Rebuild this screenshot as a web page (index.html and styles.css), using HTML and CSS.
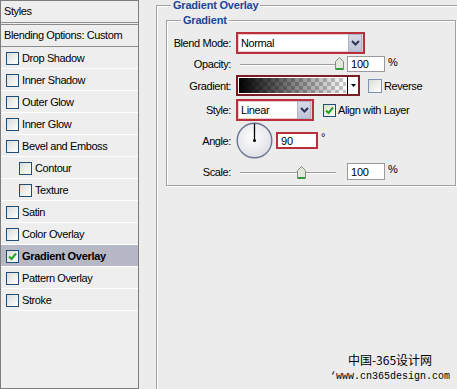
FILE: index.html
```html
<!DOCTYPE html>
<html lang="en">
<head>
    <meta charset="UTF-8">
    <title>Layer Style - Gradient Overlay</title>
    <link rel="stylesheet" href="styles.css">
</head>
<body>
<div class="window">
    <div class="styles-panel">
        <div class="panel-head">Styles</div>
        <div class="panel-blend">Blending Options: Custom</div>
        <ul class="effects">
            <li><span class="check"></span>Drop Shadow</li>
            <li><span class="check"></span>Inner Shadow</li>
            <li><span class="check"></span>Outer Glow</li>
            <li><span class="check"></span>Inner Glow</li>
            <li><span class="check"></span>Bevel and Emboss</li>
            <li class="sub"><span class="check"></span>Contour</li>
            <li class="sub"><span class="check"></span>Texture</li>
            <li><span class="check"></span>Satin</li>
            <li><span class="check"></span>Color Overlay</li>
            <li class="active"><span class="check"><svg width="11" height="11" viewBox="0 0 11 11"><path d="M2 5.5 L4.5 8 L9 2.5" fill="none" stroke="#23a323" stroke-width="2"/></svg></span>Gradient Overlay</li>
            <li><span class="check"></span>Pattern Overlay</li>
            <li><span class="check"></span>Stroke</li>
        </ul>
    </div>

    <div class="settings">
        <div class="group outer">
            <span class="group-title">Gradient Overlay</span>
            <div class="group inner">
                <span class="group-title">Gradient</span>

                <div class="row row-blend">
                    <label class="field-label">Blend Mode:</label>
                    <div class="select marked select-wide">
                        <span class="select-value">Normal</span>
                        <span class="select-btn"><svg width="9" height="6" viewBox="0 0 9 6"><path d="M1 1 L4.5 4.5 L8 1" fill="none" stroke="#2e3658" stroke-width="2"/></svg></span>
                    </div>
                </div>

                <div class="row row-opacity">
                    <label class="field-label">Opacity:</label>
                    <div class="slider">
                        <div class="track"></div>
                        <span class="thumb thumb-opacity"><svg width="9" height="13" viewBox="0 0 9 13"><path d="M0.5 4.5 L4.5 0.5 L8.5 4.5 V12.5 H0.5 Z" fill="#e4e6dc" stroke="#7c8c7c"/><path d="M1 12 H8" stroke="#2f9c3a" stroke-width="2"/></svg></span>
                    </div>
                    <input class="num" type="text" value="100">
                    <span class="unit">%</span>
                </div>

                <div class="row row-gradient">
                    <label class="field-label">Gradient:</label>
                    <div class="swatch">
                        <span class="swatch-fill"></span>
                        <span class="swatch-btn"><svg width="5" height="3" viewBox="0 0 5 3"><path d="M0 0 H5 L2.5 3 Z" fill="#000"/></svg></span>
                    </div>
                    <span class="check box-reverse"></span>
                    <span class="check-text">Reverse</span>
                </div>

                <div class="row row-style">
                    <label class="field-label">Style:</label>
                    <div class="select marked select-narrow">
                        <span class="select-value">Linear</span>
                        <span class="select-btn"><svg width="9" height="6" viewBox="0 0 9 6"><path d="M1 1 L4.5 4.5 L8 1" fill="none" stroke="#2e3658" stroke-width="2"/></svg></span>
                    </div>
                    <span class="check box-align"><svg width="11" height="11" viewBox="0 0 11 11"><path d="M2 5.5 L4.5 8 L9 2.5" fill="none" stroke="#23a323" stroke-width="2"/></svg></span>
                    <span class="check-text">Align with Layer</span>
                </div>

                <div class="row row-angle">
                    <label class="field-label">Angle:</label>
                    <svg class="dial" width="37" height="37" viewBox="0 0 37 37">
                        <defs>
                            <radialGradient id="dialFill" cx="45%" cy="40%" r="60%">
                                <stop offset="0" stop-color="#ffffff"/>
                                <stop offset="1" stop-color="#dfe0e6"/>
                            </radialGradient>
                        </defs>
                        <circle cx="18.5" cy="18.5" r="17.3" fill="url(#dialFill)" stroke="#6c7590" stroke-width="1.4"/>
                        <path d="M18.5 18.5 V1.5" stroke="#000" stroke-width="1.3"/>
                        <circle cx="18.5" cy="18.5" r="1.5" fill="#000"/>
                    </svg>
                    <input class="num num-angle" type="text" value="90">
                    <span class="degree">°</span>
                </div>

                <div class="row row-scale">
                    <label class="field-label">Scale:</label>
                    <div class="slider">
                        <div class="track track-short"></div>
                        <span class="thumb thumb-scale"><svg width="9" height="13" viewBox="0 0 9 13"><path d="M0.5 4.5 L4.5 0.5 L8.5 4.5 V12.5 H0.5 Z" fill="#e4e6dc" stroke="#7c8c7c"/><path d="M1 12 H8" stroke="#2f9c3a" stroke-width="2"/></svg></span>
                    </div>
                    <input class="num" type="text" value="100">
                    <span class="unit">%</span>
                </div>
            </div>
        </div>
    </div>

    <div class="watermark">
        <div class="wm-cn">中国-365设计网</div>
        <div class="wm-url">‘www.cn365design.com</div>
    </div>
</div>
</body>
</html>
```

FILE: styles.css
```css
body {
    margin: 0;
    background: #ececec;
    font-family: 'Liberation Sans', Arial, sans-serif;
    font-size: 11px;
    letter-spacing: -0.4px;
    color: #000;
    overflow: hidden;
}
.window {
    position: relative;
    display: flex;
    width: 457px;
    height: 389px;
    overflow: hidden;
}

/* left list */
.styles-panel {
    width: 139px;
    height: 389px;
    box-sizing: border-box;
    border: 1px solid #7d7d7d;
    background: #eeeeee;
    flex-shrink: 0;
}
.panel-head {
    height: 21px;
    line-height: 20px;
    padding-left: 3px;
    border-bottom: 3px double #8c8c8c;
}
.panel-blend {
    height: 21px;
    line-height: 21px;
    padding-left: 3px;
    border-bottom: 1px solid #8c8c8c;
}
.effects {
    list-style: none;
    margin: 0;
    padding: 0;
}
.effects li {
    display: flex;
    align-items: center;
    height: 21px;
    border-bottom: 1px solid #ffffff;
    padding-left: 5px;
}
.effects li.sub {
    padding-left: 18px;
}
.effects li.active {
    background: #b7b8c6;
    font-weight: bold;
    letter-spacing: -0.3px;
}
.check {
    display: inline-flex;
    align-items: center;
    justify-content: center;
    width: 11px;
    height: 11px;
    border: 1px solid #1f4e79;
    background: linear-gradient(135deg, #dcdcd6, #ffffff);
    margin-right: 3px;
    margin-top: 2px;
    flex-shrink: 0;
}

/* right side */
.settings {
    margin-left: 17px;
    padding-top: 5px;
}
.group {
    position: relative;
    border: 1px solid #a2a2a2;
    box-shadow: 1px 1px 0 #ffffff, inset 1px 1px 0 #ffffff;
}
.group-title {
    position: absolute;
    top: -7px;
    background: #ececec;
    padding: 0 2px;
    color: #1c4597;
    font-weight: bold;
    font-size: 11px;
    letter-spacing: -0.2px;
    line-height: 13px;
}
.outer {
    width: 320px;
    height: 400px;
}
.outer > .group-title {
    left: 14px;
}
.inner {
    margin: 14px 0 0 9px;
    width: 288px;
    height: 153px;
    padding-top: 11px;
}
.inner > .group-title {
    left: 14px;
}
.row {
    display: flex;
    align-items: center;
}
.field-label {
    width: 64px;
    text-align: right;
    margin-right: 5px;
    flex-shrink: 0;
}
.row-blend { height: 22px; }
.row-opacity { height: 16px; margin-top: 2px; }
.row-gradient { height: 21px; margin-top: 3px; }
.row-style { height: 22px; margin-top: 3px; }
.row-angle { height: 37px; margin-top: 1px; }
.row-scale { height: 17px; margin-top: 4px; }

/* combo boxes */
.select {
    display: flex;
    height: 22px;
    box-sizing: border-box;
    background: #ffffff;
}
.marked {
    border: 2px solid #b9303c;
    box-shadow: inset 0 0 0 1px #efc9cb;
}
.select-wide { width: 129px; }
.select-narrow { width: 78px; }
.select-value {
    flex: 1;
    line-height: 18px;
    padding-left: 3px;
}
.select-btn {
    display: flex;
    align-items: center;
    justify-content: center;
    width: 14px;
    margin-right: 1px;
    background: linear-gradient(#d6d9e6, #bfc3d6);
    border: 1px solid #aeb3c8;
    box-sizing: border-box;
}

/* sliders */
.slider {
    position: relative;
    width: 111px;
    height: 16px;
}
.track {
    position: absolute;
    left: 4px;
    top: 8px;
    width: 98px;
    height: 0;
    border-top: 1px solid #9c9c9c;
    border-bottom: 1px solid #ffffff;
}
.track-short {
    width: 96px;
}
.thumb {
    position: absolute;
    top: 1px;
    line-height: 0;
}
.thumb-opacity { left: 99px; }
.thumb-scale { left: 61px; top: 2px; }

.num {
    width: 38px;
    height: 16px;
    box-sizing: border-box;
    border: 1px solid #9a9a9a;
    background: #ffffff;
    font-family: inherit;
    font-size: 11px;
    letter-spacing: -0.2px;
    padding: 0 0 0 3px;
    margin: 0;
    color: #000;
}
.row-scale .num { height: 17px; }
.unit {
    margin-left: 3px;
    margin-bottom: 5px;
}
.num-angle {
    width: 42px;
    height: 17px;
    margin-left: 3px;
    border: 2px solid #b9303c;
}
.degree {
    margin-left: 3px;
    margin-bottom: 8px;
}

/* gradient swatch */
.swatch {
    display: flex;
    width: 124px;
    height: 21px;
    box-sizing: border-box;
    border: 2px solid #7a1d24;
    background: #ffffff;
}
.swatch-fill {
    flex: 1;
    border: 1px solid #ffffff;
    background:
        linear-gradient(to right, #000000, rgba(0,0,0,0)),
        repeating-conic-gradient(#c8c8c8 0 25%, #ffffff 0 50%) 0 0 / 8px 8px;
}
.swatch-btn {
    display: flex;
    align-items: center;
    justify-content: center;
    width: 10px;
    border-left: 1px solid #000;
}
.box-reverse {
    margin-left: 8px;
    margin-right: 2px;
    border-color: #7c91b4;
    width: 12px;
    height: 12px;
    margin-top: 0;
}
.box-align {
    margin-left: 9px;
    margin-right: 2px;
    margin-top: 0;
}
.dial {
    flex-shrink: 0;
}

/* watermark */
.watermark {
    position: absolute;
    left: 330px;
    top: 351px;
    width: 120px;
    text-align: center;
    letter-spacing: 0;
}
.wm-cn {
    font-family: 'Noto Sans CJK SC', sans-serif;
    font-size: 12px;
    line-height: 17px;
}
.wm-url {
    font-family: 'Liberation Mono', monospace;
    font-size: 10px;
    line-height: 14px;
    margin-top: 2px;
}
```
